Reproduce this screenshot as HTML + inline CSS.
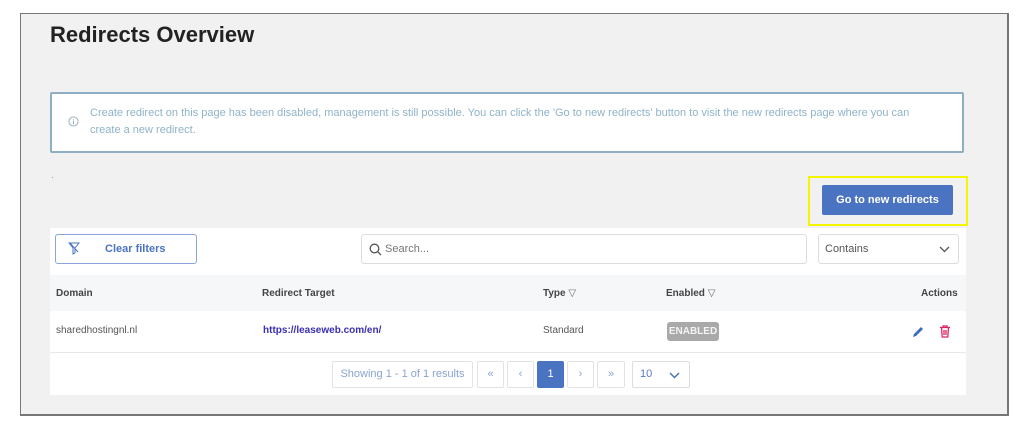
<!DOCTYPE html>
<html><head><style>
body{margin:0;width:1024px;height:435px;background:#fff;font-family:"Liberation Sans",sans-serif;position:relative;overflow:hidden}
.a{position:absolute}
.frame{left:20px;top:13px;width:986px;height:400px;border:1.5px solid #777;background:#f1f1f1;border-right-width:2px;border-bottom-width:2px}
h1{position:absolute;left:50px;top:22px;margin:0;font-size:22px;font-weight:bold;color:#222}
.info{left:50px;top:92px;width:910px;height:57px;border:2px solid #8eafc3;background:#fff;border-radius:2px}
.info p{margin:0;position:absolute;left:38px;top:11px;font-size:11px;line-height:17px;color:#8fb3c8;width:840px}
.btn{left:822px;top:185px;width:131px;height:30px;background:#4a73c1;color:#fff;font-size:11px;font-weight:bold;text-align:center;line-height:30px;border-radius:2px}
.yel{left:808px;top:176px;width:156px;height:46px;border:2px solid #f5f500}
.panel{left:50px;top:228px;width:916px;height:167px;background:#fff}
.box{position:absolute;border:1px solid #ddd;border-radius:3px;background:#fff;box-sizing:border-box;font-size:11px}
.th{font-size:10px;font-weight:bold;color:#444;position:absolute;top:288px}
.td{font-size:10px;color:#555;position:absolute;top:325px}
.pg{position:absolute;top:361px;height:27px;border:1px solid #e3e3e3;border-radius:2px;box-sizing:border-box;text-align:center;line-height:25px;font-size:11px;color:#8aa3d0;background:#fff}
</style></head><body>
<div class="a frame"></div>
<h1>Redirects Overview</h1>
<div class="a info"><svg class="a" style="left:16px;top:22px" width="11" height="11" viewBox="0 0 12 12"><circle cx="6" cy="6" r="5" fill="none" stroke="#9ab" stroke-width="1"/><path d="M6 5v4M6 3.2v.8" stroke="#9ab" stroke-width="1.1"/></svg><p>Create redirect on this page has been disabled, management is still possible. You can click the 'Go to new redirects' button to visit the new redirects page where you can<br>create a new redirect.</p></div>
<div class="a" style="left:51px;top:170px;font-size:10px;color:#999">.</div>
<div class="a yel"></div>
<div class="a btn">Go to new redirects</div>
<div class="a panel"></div>
<div class="box" style="left:55px;top:234px;width:142px;height:30px;border-color:#8aa6d8;color:#4a73c1;font-weight:bold;line-height:28px"><svg class="a" style="left:12px;top:7px" width="12" height="13" viewBox="0 0 12 13"><path d="M1 1h10L7 6v5L5 12V6z" fill="none" stroke="#4a73c1" stroke-width="1"/><path d="M2 1l8 9" stroke="#4a73c1"/></svg><span style="position:absolute;left:49px">Clear filters</span></div>
<div class="box" style="left:361px;top:234px;width:446px;height:30px;color:#777;line-height:28px"><svg class="a" style="left:7px;top:8px" width="13" height="13" viewBox="0 0 13 13"><circle cx="5.5" cy="5.5" r="4.3" fill="none" stroke="#555" stroke-width="1.3"/><path d="M8.7 8.7l3.3 3.3" stroke="#555" stroke-width="1.3"/></svg><span style="position:absolute;left:23px">Search...</span></div>
<div class="box" style="left:818px;top:234px;width:141px;height:30px;color:#555;line-height:28px"><span style="position:absolute;left:6px">Contains</span><svg class="a" style="left:120px;top:11px" width="11" height="7" viewBox="0 0 11 7"><path d="M1 1l4.5 4.5L10 1" fill="none" stroke="#555" stroke-width="1.3"/></svg></div>
<div class="a" style="left:50px;top:275px;width:916px;height:36px;background:#f6f7f9"></div>
<div class="a" style="left:50px;top:352px;width:916px;height:1px;background:#e8e8e8"></div>
<div class="th" style="left:56px">Domain</div>
<div class="th" style="left:262px">Redirect Target</div>
<div class="th" style="left:543px">Type <span style="font-weight:normal;color:#666">&#x25BD;</span></div>
<div class="th" style="left:666px">Enabled <span style="font-weight:normal;color:#666">&#x25BD;</span></div>
<div class="th" style="left:921px">Actions</div>
<div class="td" style="left:56px">sharedhostingnl.nl</div>
<div class="td" style="left:263px;color:#3a2fb0;font-weight:bold">https://leaseweb.com/en/</div>
<div class="td" style="left:543px">Standard</div>
<div class="a" style="left:667px;top:322px;width:52px;height:19px;background:#a9a9a9;border-radius:3px;color:#f4f4f4;font-size:10px;font-weight:bold;text-align:center;line-height:19px">ENABLED</div>
<svg class="a" style="left:911px;top:325px" width="14" height="14" viewBox="0 0 14 14"><path d="M2 12l1-3 7-7 2 2-7 7z" fill="#3c6bc0"/></svg>
<svg class="a" style="left:939px;top:325px" width="12" height="13" viewBox="0 0 12 13"><path d="M1 2.5h10M4 2.5V1h4v1.5M2.5 2.5l.7 9.5h5.6l.7-9.5M5 5v5M7 5v5" fill="none" stroke="#e0245e" stroke-width="1.3"/></svg>
<div class="pg" style="left:332px;width:141px;font-size:11px">Showing 1 - 1 of 1 results</div>
<div class="pg" style="left:477px;width:27px">&laquo;</div>
<div class="pg" style="left:507px;width:27px">&lsaquo;</div>
<div class="pg" style="left:537px;width:27px;background:#4a73c1;border-color:#4a73c1;color:#fff">1</div>
<div class="pg" style="left:567px;width:27px">&rsaquo;</div>
<div class="pg" style="left:597px;width:28px">&raquo;</div>
<div class="pg" style="left:632px;width:58px;border-color:#ddd;text-align:left;padding-left:7px;color:#5a7ac0">10<svg class="a" style="left:36px;top:10px" width="11" height="7" viewBox="0 0 11 7"><path d="M1 1l4.5 4.5L10 1" fill="none" stroke="#4a73c1" stroke-width="1.5"/></svg></div>
</body></html>
